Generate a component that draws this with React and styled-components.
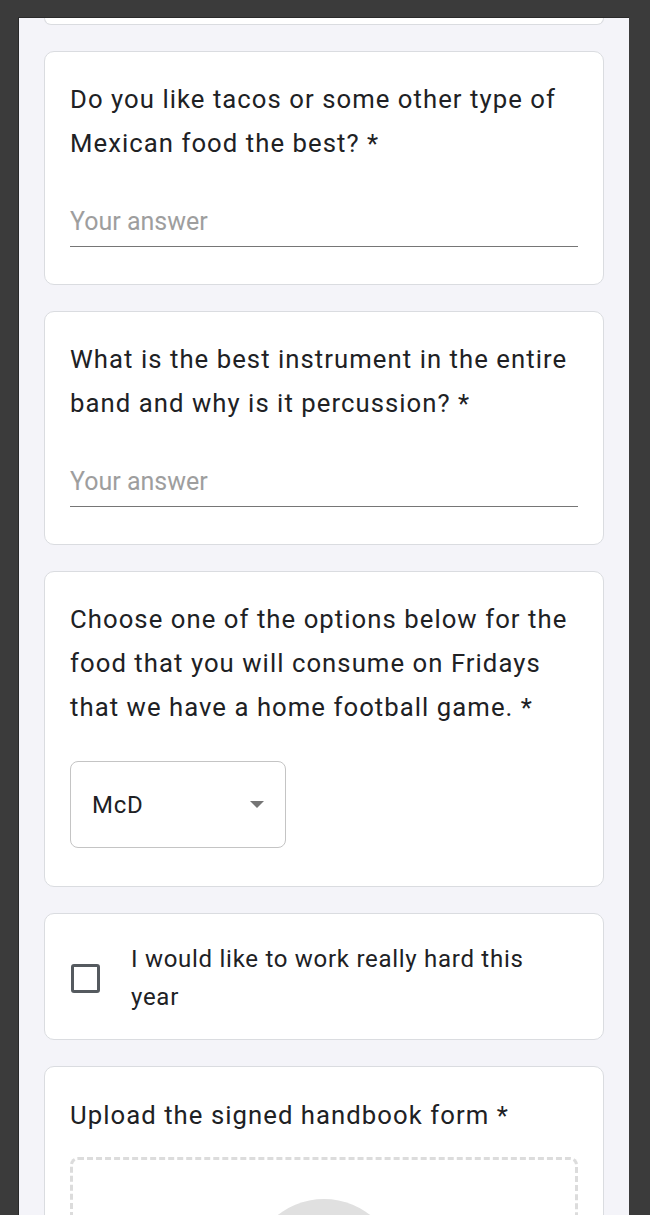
import React from "react";
import styled, { createGlobalStyle } from "styled-components";

const Global = createGlobalStyle`
  html, body { margin: 0; padding: 0; background: #3b3b3b; }
  body { font-family: Roboto, "Liberation Sans", Arial, sans-serif; color: #202124; }
  * { box-sizing: border-box; }
`;

const Screen = styled.div`
  width: 650px;
  height: 1215px;
  overflow: hidden;
  background: #3b3b3b;
  padding: 17px 21px 0 18px;
`;

const Panel = styled.div`
  background: #f4f4f9;
  border-left: 1px solid #2a2a2a;
  border-top: 1px solid #2a2a2a;
  padding: 0 25px 40px 25px;
  display: flex;
  flex-direction: column;
  gap: 26px;
  min-height: 1300px;
`;

const Card = styled.section`
  background: #fff;
  border: 1px solid #dadce0;
  border-radius: 10px;
  padding: ${(p) => p.$pad || "25px 25px 25px"};
`;

const PrevCard = styled.div`
  background: #fff;
  border: 1px solid #dadce0;
  border-top: none;
  border-radius: 0 0 10px 10px;
  height: 7px;
`;

const Title = styled.h2`
  margin: 0;
  font-size: 25.7px;
  font-weight: 400;
  letter-spacing: 1.05px;
  line-height: 44px;
  color: #202124;
`;

const AnswerField = styled.div`
  margin: 32px 0 12px;
  height: 50px;
  display: flex;
  align-items: center;
  border-bottom: 1.5px solid #767676;
  font-size: 25px;
  color: #9e9e9e;
`;

const Select = styled.div`
  margin: 32px 0 13px;
  width: 216px;
  height: 87px;
  border: 1.5px solid #c4c4c4;
  border-radius: 8px;
  display: flex;
  align-items: center;
  justify-content: space-between;
  padding: 0 21px 0 21px;
  font-size: 24px;
  letter-spacing: 0.7px;
  color: #202124;
`;

const Arrow = styled.span`
  width: 0;
  height: 0;
  border-left: 7.5px solid transparent;
  border-right: 7.5px solid transparent;
  border-top: 7.5px solid #757575;
`;

const CheckRow = styled.label`
  display: flex;
  align-items: center;
  gap: 31px;
  font-size: 24px;
  letter-spacing: 0.72px;
  line-height: 38px;
  color: #202124;
`;

const CheckText = styled.span`
  max-width: 425px;
`;

const Box = styled.span`
  flex: none;
  width: 29px;
  height: 29px;
  margin-left: 1px;
  border: 3px solid #555a5f;
  border-radius: 3px;
`;

const DropZone = styled.div`
  margin-top: 20px;
  height: 260px;
  border: 3px dashed #dcdcdc;
  border-radius: 8px;
  display: flex;
  justify-content: center;
  padding-top: 39px;
`;

const Circle = styled.div`
  width: 150px;
  height: 150px;
  border-radius: 50%;
  background: #e0e0e0;
`;

const TextQuestion = ({ title }) => (
  <Card>
    <Title>{title}</Title>
    <AnswerField>Your answer</AnswerField>
  </Card>
);

export default function App() {
  return (
    <>
      <Global />
      <Screen>
        <Panel>
          <PrevCard />
          <TextQuestion title="Do you like tacos or some other type of Mexican food the best? *" />
          <TextQuestion title="What is the best instrument in the entire band and why is it percussion? *" />
          <Card>
            <Title>Choose one of the options below for the food that you will consume on Fridays that we have a home football game. *</Title>
            <Select>
              <span>McD</span>
              <Arrow />
            </Select>
          </Card>
          <Card $pad="26px 25px 23px">
            <CheckRow>
              <Box />
              <CheckText>I would like to work really hard this year</CheckText>
            </CheckRow>
          </Card>
          <Card $pad="26px 25px 25px">
            <Title>Upload the signed handbook form *</Title>
            <DropZone>
              <Circle />
            </DropZone>
          </Card>
        </Panel>
      </Screen>
    </>
  );
}
